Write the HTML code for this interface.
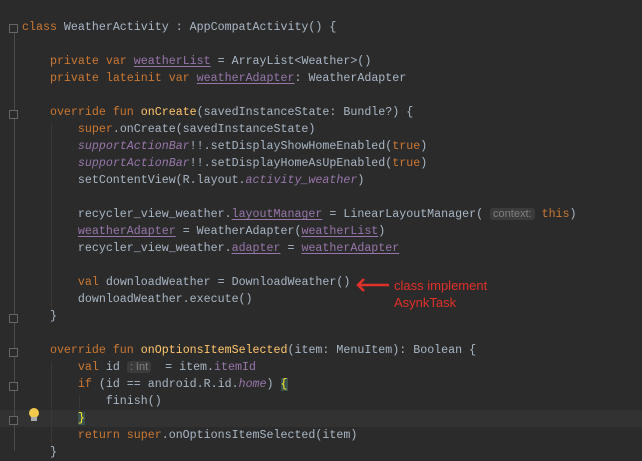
<!DOCTYPE html>
<html><head><style>
body{margin:0;width:642px;height:451px;background:#2b2b2b;overflow:hidden;position:relative;font-family:"Liberation Mono",monospace;font-size:11.65px;color:#a9b7c6}
.l{position:absolute;left:22px;height:17px;line-height:17px;white-space:pre}
.k{color:#cc7832}.p{color:#9876aa}.u{text-decoration:underline;text-underline-offset:2px}.i{font-style:italic}.f{color:#ffc66d}
.h{background:#3b3b3b;color:#808080;font-family:"Liberation Sans",sans-serif;font-size:11px;border-radius:3px;padding:0 3px}
.g{position:absolute;left:14px;width:1px;background:#4a4a4a}
.fold{position:absolute;left:9px;width:9px;height:9px;border:1px solid #666;background:#2b2b2b;box-sizing:border-box}
.ig{position:absolute;width:1px;background:#383838}
</style></head><body>
<div style="position:absolute;left:0;top:410px;width:642px;height:17px;background:#323232"></div>
<div class="g" style="top:24px;height:427px"></div>
<div class="ig" style="left:51px;top:124px;height:188px"></div>
<div class="ig" style="left:51px;top:362px;height:89px"></div>
<div class="ig" style="left:79px;top:396px;height:16px"></div>
<div class="fold" style="top:24px"></div>
<div class="fold" style="top:110px"></div>
<div class="fold" style="top:314px"></div>
<div class="fold" style="top:348px"></div>
<div class="fold" style="top:382px"></div>
<div class="fold" style="top:416px"></div>
<div class="l" style="top:19px"><span class="k">class</span> WeatherActivity : AppCompatActivity() {</div>
<div class="l" style="top:53px">    <span class="k">private var</span> <span class="p u">weatherList</span> = ArrayList&lt;Weather&gt;()</div>
<div class="l" style="top:70px">    <span class="k">private lateinit var</span> <span class="p u">weatherAdapter</span>: WeatherAdapter</div>
<div class="l" style="top:104px">    <span class="k">override fun</span> <span class="f">onCreate</span>(savedInstanceState: Bundle?) {</div>
<div class="l" style="top:121px">        <span class="k">super</span>.onCreate(savedInstanceState)</div>
<div class="l" style="top:138px">        <span class="p i">supportActionBar</span>!!.setDisplayShowHomeEnabled(<span class="k">true</span>)</div>
<div class="l" style="top:155px">        <span class="p i">supportActionBar</span>!!.setDisplayHomeAsUpEnabled(<span class="k">true</span>)</div>
<div class="l" style="top:172px">        setContentView(R.layout.<span class="p i">activity_weather</span>)</div>
<div class="l" style="top:206px">        recycler_view_weather.<span class="p u">layoutManager</span> = LinearLayoutManager( <span class="h">context:</span> <span class="k">this</span>)</div>
<div class="l" style="top:223px">        <span class="p u">weatherAdapter</span> = WeatherAdapter(<span class="p u">weatherList</span>)</div>
<div class="l" style="top:240px">        recycler_view_weather.<span class="p u">adapter</span> = <span class="p u">weatherAdapter</span></div>
<div class="l" style="top:274px">        <span class="k">val</span> downloadWeather = DownloadWeather()</div>
<div class="l" style="top:291px">        downloadWeather.execute()</div>
<div class="l" style="top:308px">    }</div>
<div class="l" style="top:342px">    <span class="k">override fun</span> <span class="f">onOptionsItemSelected</span>(item: MenuItem): Boolean {</div>
<div class="l" style="top:359px">        <span class="k">val</span> id <span class="h">: Int</span>  = item.<span class="p">itemId</span></div>
<div class="l" style="top:376px">        <span class="k">if</span> (id == android.R.id.<span class="p i">home</span>) <span style="color:#ffef28;background:#3b514d">{</span></div>
<div class="l" style="top:393px">            finish()</div>
<div class="l" style="top:410px">        <span style="color:#ffef28;background:#3b514d">}</span></div>
<div class="l" style="top:427px">        <span class="k">return super</span>.onOptionsItemSelected(item)</div>
<div class="l" style="top:444px">    }</div>
<svg style="position:absolute;left:27px;top:407px" width="14" height="16"><circle cx="7" cy="6" r="5" fill="#f2c94c"/><rect x="4" y="10" width="6" height="4" fill="#aaa"/></svg>
<svg style="position:absolute;left:355px;top:277px" width="36" height="16"><path d="M34 8H3M9 2L3 8L9 14" stroke="#e0302a" stroke-width="2.5" fill="none"/></svg>
<div style="position:absolute;left:394px;top:277px;font-family:'Liberation Sans',sans-serif;font-size:13px;line-height:17px;color:#e0302a">class implement<br>AsynkTask</div>
</body></html>
